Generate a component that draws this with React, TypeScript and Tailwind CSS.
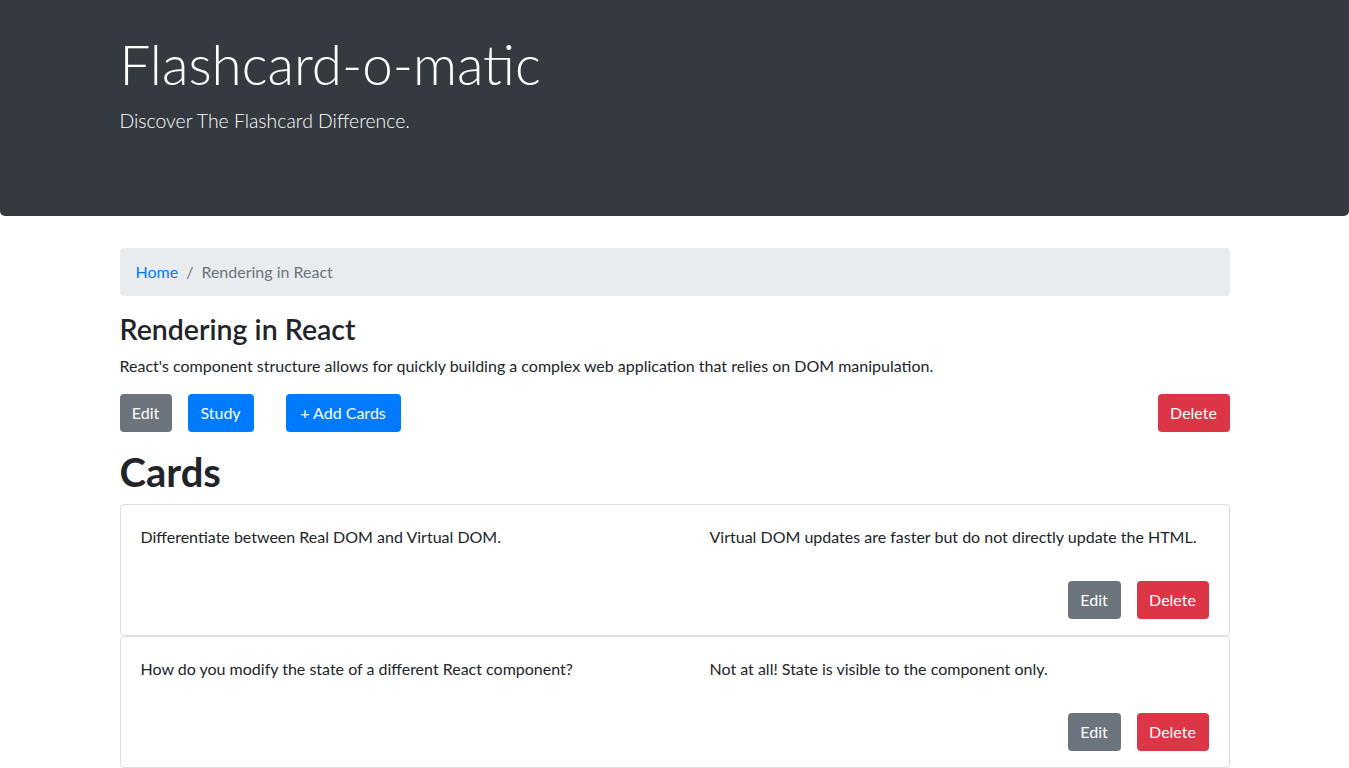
import React from "react";

const cards = [
  {
    front: "Differentiate between Real DOM and Virtual DOM.",
    back: "Virtual DOM updates are faster but do not directly update the HTML.",
  },
  {
    front: "How do you modify the state of a different React component?",
    back: "Not at all! State is visible to the component only.",
  },
];

const btn = "h-[38px] px-3 rounded-[4px] text-white text-base leading-6";

const App: React.FC = () => {
  return (
    <div className="min-h-screen bg-white font-['Lato',sans-serif] text-[#212529]">
      {/* Jumbotron */}
      <header className="h-[216px] bg-[#343a40] rounded-b-[5px] text-white">
        <div className="w-[1110px] mx-auto pt-8">
          <h1 className="text-[54.7px] font-light leading-[1.2]">Flashcard-o-matic</h1>
          <p className="mt-2 text-[19.4px] font-light leading-[1.5]">Discover The Flashcard Difference.</p>
        </div>
      </header>

      <main className="w-[1110px] mx-auto mt-8">
        {/* Breadcrumb */}
        <nav className="h-12 px-4 flex items-center gap-2 bg-[#e9ecef] rounded-[4px] text-base">
          <a className="text-[#007bff]" href="#">Home</a>
          <span className="text-[#6c757d]">/</span>
          <span className="text-[#6c757d]">Rendering in React</span>
        </nav>

        <h3 className="mt-4 text-[28.5px] font-semibold leading-[1.2]">Rendering in React</h3>
        <p className="mt-2 text-base leading-6">
          React's component structure allows for quickly building a complex web application that relies on DOM manipulation.
        </p>

        <div className="mt-4 flex items-center">
          <button className={`${btn} bg-[#6c757d] w-[52px]`}>Edit</button>
          <button className={`${btn} bg-[#007bff] ml-4 w-[66px]`}>Study</button>
          <button className={`${btn} bg-[#007bff] ml-8 w-[115px]`}>+ Add Cards</button>
          <button className={`${btn} bg-[#dc3545] ml-auto w-[72px]`}>Delete</button>
        </div>

        <h1 className="mt-4 mb-2 text-[40px] font-bold leading-[1.2]">Cards</h1>

        <div className="flex flex-col">
          {cards.map((card, i) => (
            <div key={i} className="border border-[#dfdfdf] rounded-[4px] px-5 pt-5 pb-4">
              <div className="flex text-base leading-6">
                <p className="w-[569px]">{card.front}</p>
                <p>{card.back}</p>
              </div>
              <div className="mt-8 flex justify-end gap-4">
                <button className={`${btn} bg-[#6c757d] w-[53px]`}>Edit</button>
                <button className={`${btn} bg-[#dc3545] w-[72px]`}>Delete</button>
              </div>
            </div>
          ))}
        </div>
      </main>
    </div>
  );
};

export default App;
